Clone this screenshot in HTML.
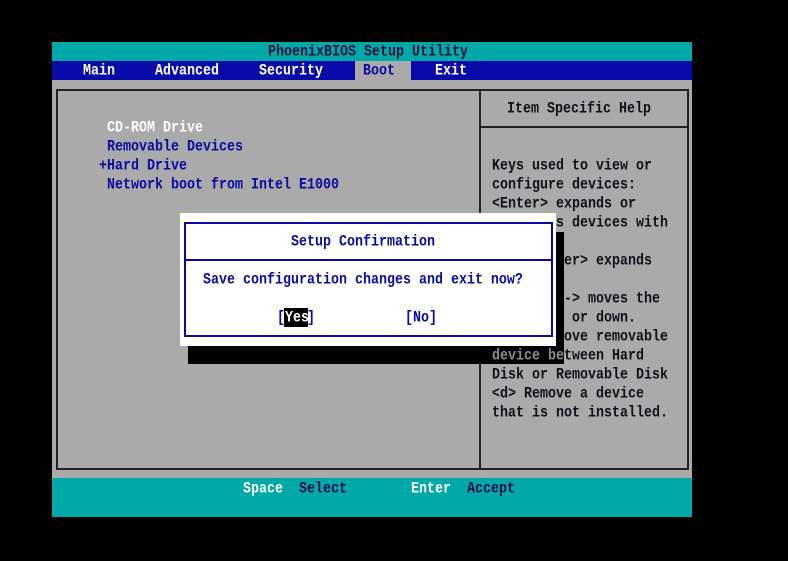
<!DOCTYPE html>
<html><head><style>
body{margin:0;width:788px;height:561px;background:#000;position:relative;overflow:hidden}
div{position:absolute;box-sizing:border-box}
.t{position:absolute;font:bold 13.33px/19px "Liberation Mono",monospace;white-space:pre;transform:translateY(1px) scaleY(1.2);transform-origin:0 50%}
.w{color:#fff}.b{color:#0a0aa0}.n{color:#101040}.k{color:#101018}
</style></head><body>
<div style="left:52px;top:42px;width:640px;height:475px;background:#aaaaaa"></div>
<div style="left:52px;top:42px;width:640px;height:19px;background:#00a8a8"></div>
<div style="left:52px;top:61px;width:640px;height:19px;background:#0a0aa8"></div>
<div style="left:355px;top:61px;width:56px;height:19px;background:#aaaaaa"></div>
<div style="left:52px;top:478px;width:640px;height:39px;background:#00a8a8"></div>
<div style="left:56px;top:89px;width:425px;height:381px;border:2px solid #222"></div>
<div style="left:479px;top:89px;width:210px;height:381px;border:2px solid #222"></div>
<div style="left:479px;top:126px;width:210px;height:2px;background:#222"></div>

<span class="t n" style="left:268px;top:42px">PhoenixBIOS Setup Utility</span>
<span class="t w" style="left:83px;top:61px">Main</span>
<span class="t w" style="left:155px;top:61px">Advanced</span>
<span class="t w" style="left:259px;top:61px">Security</span>
<span class="t b" style="left:363px;top:61px">Boot</span>
<span class="t w" style="left:435px;top:61px">Exit</span>

<span class="t w" style="left:107px;top:118px">CD-ROM Drive</span>
<span class="t b" style="left:107px;top:137px">Removable Devices</span>
<span class="t b" style="left:99px;top:156px">+Hard Drive</span>
<span class="t b" style="left:107px;top:175px">Network boot from Intel E1000</span>

<span class="t k" style="left:507px;top:99px">Item Specific Help</span>
<span class="t k" style="left:492px;top:156px">Keys used to view or</span>
<span class="t k" style="left:492px;top:175px">configure devices:</span>
<span class="t k" style="left:492px;top:194px">&lt;Enter&gt; expands or</span>
<span class="t k" style="left:492px;top:213px">collapses devices with</span>
<span class="t k" style="left:492px;top:232px">a + or -</span>
<span class="t k" style="left:492px;top:251px">&lt;Ctrl+Enter&gt; expands</span>
<span class="t k" style="left:492px;top:270px">all</span>
<span class="t k" style="left:492px;top:289px">&lt;+&gt; and &lt;-&gt; moves the</span>
<span class="t k" style="left:492px;top:308px">device up or down.</span>
<span class="t k" style="left:492px;top:327px">&lt;n&gt; May move removable</span>
<span class="t k" style="left:492px;top:346px">device between Hard</span>
<span class="t k" style="left:492px;top:365px">Disk or Removable Disk</span>
<span class="t k" style="left:492px;top:384px">&lt;d&gt; Remove a device</span>
<span class="t k" style="left:492px;top:403px">that is not installed.</span>

<div style="left:188px;top:232px;width:376px;height:132px;background:#000"></div>
<span class="t" style="left:492px;top:346px;color:#8a8a8a">device be</span>
<div style="left:180px;top:213px;width:376px;height:133px;background:#fff"></div>
<div style="left:184px;top:222px;width:369px;height:115px;border:2px solid #0a0aa0"></div>
<div style="left:184px;top:259px;width:369px;height:2px;background:#0a0aa0"></div>
<span class="t b" style="left:291px;top:232px">Setup Confirmation</span>
<span class="t b" style="left:203px;top:270px">Save configuration changes and exit now?</span>
<span class="t b" style="left:277px;top:308px">[</span>
<div style="left:284px;top:308px;width:24px;height:19px;background:#000"></div>
<span class="t w" style="left:285px;top:308px">Yes</span>
<span class="t b" style="left:307px;top:308px">]</span>
<span class="t b" style="left:405px;top:308px">[No]</span>

<span class="t w" style="left:243px;top:479px">Space</span>
<span class="t n" style="left:299px;top:479px">Select</span>
<span class="t w" style="left:411px;top:479px">Enter</span>
<span class="t n" style="left:467px;top:479px">Accept</span>
</body></html>
